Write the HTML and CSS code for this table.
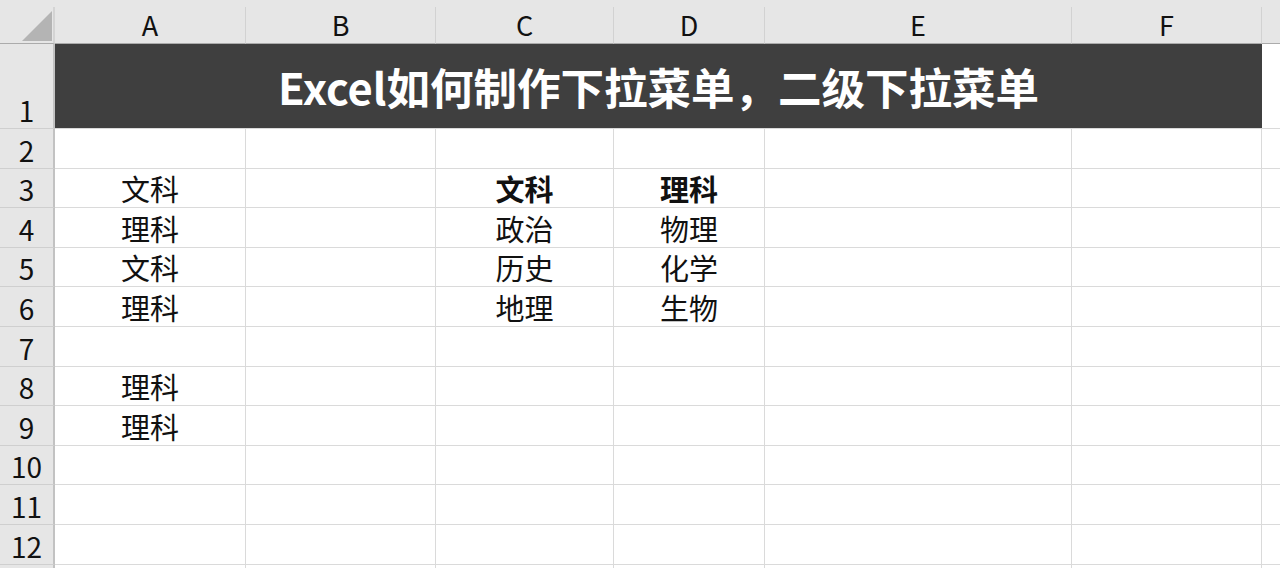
FILE: index.html
```html
<!DOCTYPE html>
<html lang="zh-CN">
<head>
<meta charset="utf-8">
<title>Excel如何制作下拉菜单</title>
<link rel="stylesheet" href="styles.css">
</head>
<body>
<div class="sheet">
  <div class="strip"></div>

  <div class="corner"><span class="tri"></span></div>
  <div class="colhead">A</div>
  <div class="colhead">B</div>
  <div class="colhead">C</div>
  <div class="colhead">D</div>
  <div class="colhead">E</div>
  <div class="colhead">F</div>
  <div class="colhead last"></div>

  <div class="rowhead">1</div>
  <div class="title">Excel如何制作下拉菜单，二级下拉菜单</div>
  <div class="cell last"></div>

  <div class="rowhead">2</div>
  <div class="cell"></div><div class="cell"></div><div class="cell"></div><div class="cell"></div><div class="cell"></div><div class="cell"></div><div class="cell last"></div>

  <div class="rowhead">3</div>
  <div class="cell">文科</div><div class="cell"></div><div class="cell bold">文科</div><div class="cell bold">理科</div><div class="cell"></div><div class="cell"></div><div class="cell last"></div>

  <div class="rowhead">4</div>
  <div class="cell">理科</div><div class="cell"></div><div class="cell">政治</div><div class="cell">物理</div><div class="cell"></div><div class="cell"></div><div class="cell last"></div>

  <div class="rowhead">5</div>
  <div class="cell">文科</div><div class="cell"></div><div class="cell">历史</div><div class="cell">化学</div><div class="cell"></div><div class="cell"></div><div class="cell last"></div>

  <div class="rowhead">6</div>
  <div class="cell">理科</div><div class="cell"></div><div class="cell">地理</div><div class="cell">生物</div><div class="cell"></div><div class="cell"></div><div class="cell last"></div>

  <div class="rowhead">7</div>
  <div class="cell"></div><div class="cell"></div><div class="cell"></div><div class="cell"></div><div class="cell"></div><div class="cell"></div><div class="cell last"></div>

  <div class="rowhead">8</div>
  <div class="cell">理科</div><div class="cell"></div><div class="cell"></div><div class="cell"></div><div class="cell"></div><div class="cell"></div><div class="cell last"></div>

  <div class="rowhead">9</div>
  <div class="cell">理科</div><div class="cell"></div><div class="cell"></div><div class="cell"></div><div class="cell"></div><div class="cell"></div><div class="cell last"></div>

  <div class="rowhead">10</div>
  <div class="cell"></div><div class="cell"></div><div class="cell"></div><div class="cell"></div><div class="cell"></div><div class="cell"></div><div class="cell last"></div>

  <div class="rowhead">11</div>
  <div class="cell"></div><div class="cell"></div><div class="cell"></div><div class="cell"></div><div class="cell"></div><div class="cell"></div><div class="cell last"></div>

  <div class="rowhead">12</div>
  <div class="cell"></div><div class="cell"></div><div class="cell"></div><div class="cell"></div><div class="cell"></div><div class="cell"></div><div class="cell last"></div>

  <div class="rowhead"></div>
  <div class="cell"></div><div class="cell"></div><div class="cell"></div><div class="cell"></div><div class="cell"></div><div class="cell"></div><div class="cell last"></div>
</div>
</body>
</html>
```

FILE: styles.css
```css
html, body {
  margin: 0;
  padding: 0;
  background: #ffffff;
  overflow: hidden;
}

.sheet {
  width: 1280px;
  height: 568px;
  overflow: hidden;
  display: grid;
  grid-template-columns: 55px 191px 190px 178px 151px 307px 190px 18px;
  grid-template-rows: 7px 37px 85px repeat(11, 39.6px) 40px;
  font-family: "Noto Sans CJK SC", "Noto Sans", sans-serif;
  color: #111111;
}

.strip {
  grid-column: 1 / -1;
  background: #e6e6e6;
}

.corner {
  background: #e6e6e6;
  border-right: 2px solid #d4d4d4;
  border-bottom: 1px solid #ababab;
  box-sizing: border-box;
  display: flex;
  justify-content: flex-end;
  align-items: flex-end;
  padding: 0 1px 2px 0;
}

.tri {
  width: 0;
  height: 0;
  border-left: 30px solid transparent;
  border-bottom: 30px solid #b4b4b4;
}

.colhead {
  background: #e6e6e6;
  border-right: 1px solid #d2d2d2;
  border-bottom: 1px solid #ababab;
  box-sizing: border-box;
  display: flex;
  align-items: center;
  justify-content: center;
  font-size: 27px;
  line-height: 1;
  padding-bottom: 2px;
}

.colhead.last {
  border-right: none;
}

.rowhead {
  background: #e6e6e6;
  border-right: 2px solid #c2c2c2;
  border-bottom: 1px solid #cfcfcf;
  box-sizing: border-box;
  display: flex;
  align-items: flex-end;
  justify-content: center;
  font-size: 28px;
  line-height: 1;
  padding-bottom: 4px;
}

.title {
  grid-column: span 6;
  background: #3f3f3f;
  color: #ffffff;
  font-weight: 700;
  font-size: 43.5px;
  display: flex;
  align-items: center;
  justify-content: center;
  line-height: 1;
  border-bottom: 1px solid #d9d9d9;
  box-sizing: border-box;
  padding-top: 1px;
}

.cell {
  border-right: 1px solid #dadada;
  border-bottom: 1px solid #dadada;
  box-sizing: border-box;
  display: flex;
  align-items: flex-end;
  justify-content: center;
  font-size: 29px;
  line-height: 1;
  padding-bottom: 4px;
  white-space: nowrap;
}

.cell.last {
  border-right: none;
}

.bold {
  font-weight: 700;
}
```
